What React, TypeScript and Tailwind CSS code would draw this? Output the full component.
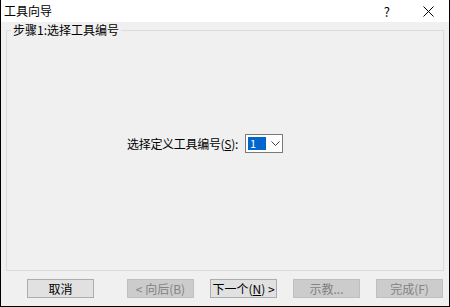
import React from "react";

const cjk = { fontFamily: "'Noto Sans CJK SC', 'Liberation Sans', sans-serif" };

function WizButton({ label, disabled }: { label: React.ReactNode; disabled?: boolean }) {
  return (
    <button
      type="button"
      disabled={disabled}
      className={`flex h-[19px] w-[67px] items-center justify-center border text-[12px] leading-none ${
        disabled
          ? "border-[#bfbfbf] bg-[#cccccc] text-[#838383]"
          : "border-[#adadad] bg-[#e1e1e1] text-black"
      }`}
    >
      {label}
    </button>
  );
}

export default function App() {
  return (
    <div
      className="flex h-[307px] w-[450px] flex-col overflow-hidden border-b border-l border-r border-black bg-[#f0f0f0]"
      style={cjk}
    >
      {/* Title bar */}
      <div className="flex h-[22px] shrink-0 items-center bg-white pl-[3px] text-[12px] text-black">
        <span>工具向导</span>
        <span className="ml-auto mr-[33px] text-[13px] leading-none">?</span>
        <svg width="11" height="11" viewBox="0 0 11 11" className="mr-[15px]">
          <path d="M0.5 0.5 L10.5 10.5 M10.5 0.5 L0.5 10.5" stroke="#000" strokeWidth="1" />
        </svg>
      </div>

      {/* Step group */}
      <div className="px-[5px] pt-[1px]">
        <fieldset className="h-[248px] border border-[#dcdcdc] px-0">
          <legend className="ml-[4px] px-[2px] text-[12px] leading-[14px] text-black">
            步骤1:选择工具编号
          </legend>
          <div className="flex items-center pl-[120px] pt-[97px]">
            <span className="w-[118px] whitespace-nowrap text-[12px] tracking-[-0.3px] text-black">
              选择定义工具编号(<span className="underline">S</span>):
            </span>
            <div className="flex h-[19px] w-[38px] items-center border border-[#7a7a7a] bg-white">
              <div className="ml-[2px] flex h-[13px] w-[18px] items-center bg-[#0066cc] pl-[2px] text-[11px] leading-none text-white">
                1
              </div>
              <svg width="9" height="6" viewBox="0 0 9 6" className="ml-[5px]">
                <path d="M0.5 0.5 L4.5 4.5 L8.5 0.5" fill="none" stroke="#404040" strokeWidth="1" />
              </svg>
            </div>
          </div>
        </fieldset>
      </div>

      {/* Buttons */}
      <div className="mt-[8px] flex pl-[26px]">
        <WizButton label="取消" />
        <div className="ml-[33px] flex gap-[16px]">
          <WizButton label="< 向后(B)" disabled />
          <WizButton
            label={
              <>
                下一个(<span className="underline">N</span>) &gt;
              </>
            }
          />
          <WizButton label="示教..." disabled />
          <WizButton label="完成(F)" disabled />
        </div>
      </div>
    </div>
  );
}
